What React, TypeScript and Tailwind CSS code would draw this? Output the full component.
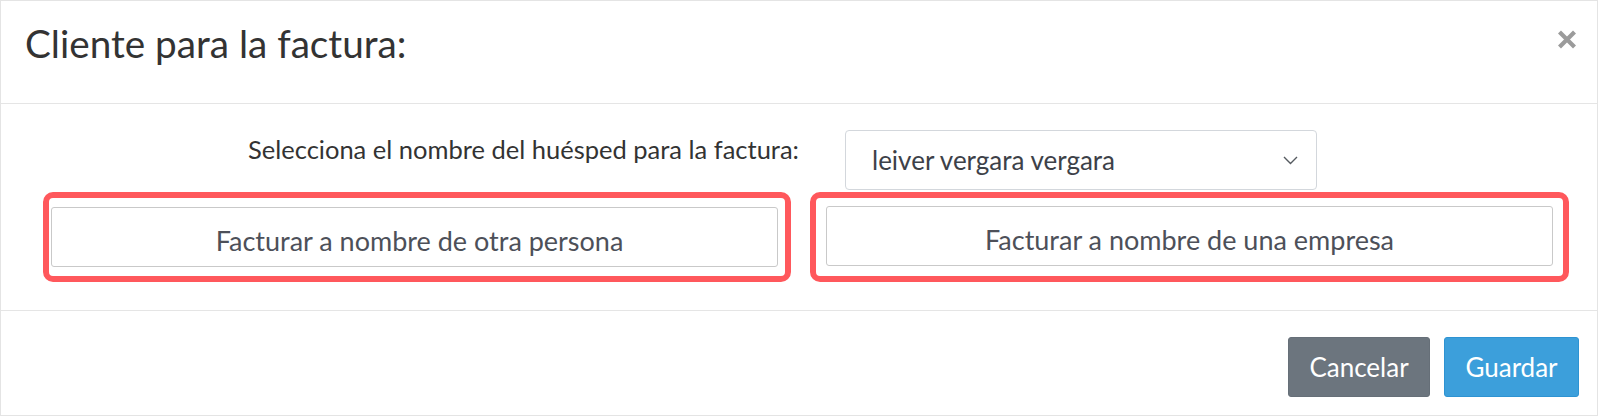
import React from "react";

export default function App() {
  return (
    <div className="w-[1600px] h-[416px] bg-white" style={{ fontFamily: "Lato, 'Noto Sans', sans-serif" }}>
      <div className="w-[1598px] h-[416px] border border-[#e4e4e4] flex flex-col bg-white">
        {/* Header */}
        <div className="h-[103px] border-b border-[#e5e5e5] flex items-start justify-between pl-[24px] pr-[20px] pt-[23px] shrink-0">
          <h4 className="text-[38.7px] leading-none text-[#333333] font-normal">Cliente para la factura:</h4>
          <button className="mt-[5px] w-[20px] h-[20px] flex items-center justify-center">
            <svg width="20" height="19" viewBox="0 0 20 19">
              <path d="M2.5 2 L17.5 17 M17.5 2 L2.5 17" stroke="#9b9b9b" strokeWidth="4.2" strokeLinecap="butt" />
            </svg>
          </button>
        </div>

        {/* Body */}
        <div className="h-[207px] shrink-0 flex flex-col pt-[26px] border-b border-[#e5e5e5]">
          <div className="flex items-start">
            <div className="w-[798px] text-right pt-[7px]">
              <span className="text-[25.5px] leading-none text-[#333333]">Selecciona el nombre del huésped para la factura:</span>
            </div>
            <div className="ml-[46px] w-[472px] h-[60px] border border-[#d3d7dc] rounded-[4px] flex items-center justify-between pl-[26px] pr-[18px]">
              <span className="text-[26px] text-[#3d4148]">leiver vergara vergara</span>
              <svg width="15" height="9" viewBox="0 0 15 9">
                <path d="M1 1 L7.5 7.5 L14 1" fill="none" stroke="#555a60" strokeWidth="1.4" />
              </svg>
            </div>
          </div>
          <div className="flex mt-[2px]">
            <div className="ml-[42px] w-[748px] h-[90px] border-[6px] border-[#ff585c] rounded-[10px] pl-[2px] pr-[7px] pt-[9px]">
              <button className="w-full h-[60px] border border-[#c9c9c9] rounded-[3px] bg-white text-[27px] text-[#4d5059] pt-[8px] pl-[10px]">
                Facturar a nombre de otra persona
              </button>
            </div>
            <div className="ml-[19px] w-[759px] h-[90px] border-[6px] border-[#ff585c] rounded-[10px] px-[10px] pt-[8px]">
              <button className="w-full h-[60px] border border-[#c9c9c9] rounded-[3px] bg-white text-[27px] text-[#4d5059] pt-[8px]">
                Facturar a nombre de una empresa
              </button>
            </div>
          </div>
        </div>

        {/* Footer */}
        <div className="flex-1 flex items-start justify-end pt-[26px] pr-[18px] gap-[14px]">
          <button className="w-[142px] h-[60px] rounded-[3px] bg-[#6c757e] border border-[#666f78] text-white text-[26px]">
            Cancelar
          </button>
          <button className="w-[135px] h-[60px] rounded-[3px] bg-[#3c9fdb] border border-[#2e93d2] text-white text-[26px]">
            Guardar
          </button>
        </div>
      </div>
    </div>
  );
}
